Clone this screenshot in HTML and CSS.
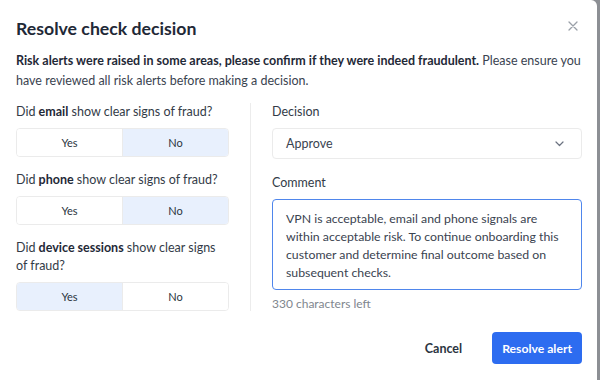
FILE: index.html
```html
<!DOCTYPE html>
<html lang="en">
<head>
    <meta charset="UTF-8">
    <meta name="viewport" content="width=device-width, initial-scale=1.0">
    <title>Resolve check decision</title>
    <link rel="stylesheet" href="styles.css">
</head>
<body>
    <div class="modal">
        <header class="modal-header">
            <h1>Resolve check decision</h1>
            <button class="close-btn" aria-label="Close">
                <svg width="10" height="10" viewBox="0 0 10 10">
                    <path d="M1 1L9 9M9 1L1 9" stroke="#9aa0a8" stroke-width="1.3" stroke-linecap="round"/>
                </svg>
            </button>
        </header>

        <p class="intro"><strong>Risk alerts were raised in some areas, please confirm if they were indeed fraudulent.</strong> Please ensure you have reviewed all risk alerts before making a decision.</p>

        <div class="columns">
            <div class="questions">
                <div class="field">
                    <label>Did <strong>email</strong> show clear signs of fraud?</label>
                    <div class="toggle">
                        <button>Yes</button>
                        <button class="selected">No</button>
                    </div>
                </div>
                <div class="field">
                    <label>Did <strong>phone</strong> show clear signs of fraud?</label>
                    <div class="toggle">
                        <button>Yes</button>
                        <button class="selected">No</button>
                    </div>
                </div>
                <div class="field">
                    <label>Did <strong>device sessions</strong> show clear signs of fraud?</label>
                    <div class="toggle">
                        <button class="selected">Yes</button>
                        <button>No</button>
                    </div>
                </div>
            </div>

            <div class="divider"></div>

            <div class="decision">
                <div class="field">
                    <label>Decision</label>
                    <div class="select">
                        <span>Approve</span>
                        <svg width="9" height="6" viewBox="0 0 9 6">
                            <path d="M1 1L4.5 4.5L8 1" fill="none" stroke="#6b7280" stroke-width="1.2" stroke-linecap="round" stroke-linejoin="round"/>
                        </svg>
                    </div>
                </div>
                <div class="field">
                    <label>Comment</label>
                    <div class="comment">VPN is acceptable, email and phone signals are<br>within acceptable risk. To continue onboarding this<br>customer and determine final outcome based on<br>subsequent checks.</div>
                    <div class="counter">330 characters left</div>
                </div>
            </div>
        </div>

        <footer class="modal-footer">
            <button class="cancel-btn">Cancel</button>
            <button class="resolve-btn">Resolve alert</button>
        </footer>
    </div>
</body>
</html>
```

FILE: styles.css
```css
body {
    margin: 0;
    background-color: #8c8f94;
    font-family: Lato, 'Open Sans', sans-serif;
    color: #3a4350;
}
.modal {
    width: 597px;
    height: 380px;
    box-sizing: border-box;
    background-color: #fff;
    border-radius: 0 6px 0 0;
    padding: 17px 15px 0 16px;
}
.modal-header {
    display: flex;
    justify-content: space-between;
    align-items: center;
}
h1 {
    margin: 0;
    font-size: 17.7px;
    line-height: 24px;
    font-weight: 700;
    color: #1f2937;
}
.close-btn {
    background: none;
    border: none;
    padding: 0;
    margin: 0 4px 6px 0;
    display: flex;
    cursor: pointer;
}
strong {
    color: #1f2937;
}
.intro {
    margin: 10px 0 0;
    font-size: 12.5px;
    line-height: 20px;
}
.columns {
    display: flex;
    gap: 21px;
    margin-top: 12px;
}
.questions {
    width: 213px;
}
.divider {
    width: 1px;
    background-color: #ececec;
}
.decision {
    flex: 1;
}
.field {
    margin-bottom: 14px;
}
.decision .field {
    margin-bottom: 15px;
}
.field:last-child,
.decision .field:last-child {
    margin-bottom: 0;
}
label {
    display: block;
    font-size: 12.5px;
    line-height: 18px;
    margin-bottom: 7px;
    color: #333b47;
}
.toggle {
    display: flex;
    height: 29px;
    border: 1px solid #ebebeb;
    border-radius: 4px;
    overflow: hidden;
    box-sizing: border-box;
}
.toggle button {
    flex: 1;
    border: none;
    background-color: #fff;
    font-family: inherit;
    font-size: 11px;
    color: #2b3440;
    cursor: pointer;
}
.toggle button + button {
    border-left: 1px solid #ebebeb;
}
.toggle .selected {
    background-color: #e8f0fd;
}
.select {
    height: 31px;
    box-sizing: border-box;
    border: 1px solid #ebebeb;
    border-radius: 4px;
    display: flex;
    align-items: center;
    justify-content: space-between;
    padding: 0 17px 0 13px;
    font-size: 12.5px;
}
.comment {
    border: 1px solid #4f86ec;
    border-radius: 4px;
    padding: 10px 4px 9px 13px;
    font-size: 12.3px;
    line-height: 18px;
    height: 91px;
    box-sizing: border-box;
    white-space: nowrap;
    overflow: hidden;
}
.counter {
    margin-top: 6px;
    font-size: 12px;
    color: #80868e;
}
.modal-footer {
    display: flex;
    justify-content: flex-end;
    align-items: center;
    gap: 30px;
    margin-top: 21px;
}
.cancel-btn {
    background: none;
    border: none;
    padding: 0;
    font-family: inherit;
    font-size: 12.5px;
    font-weight: 700;
    color: #2b3440;
    cursor: pointer;
}
.resolve-btn {
    background-color: #2d6cf0;
    color: #fff;
    border: none;
    border-radius: 4px;
    height: 32px;
    padding: 0 10px;
    font-family: inherit;
    font-size: 12.2px;
    font-weight: 700;
    cursor: pointer;
}
```
